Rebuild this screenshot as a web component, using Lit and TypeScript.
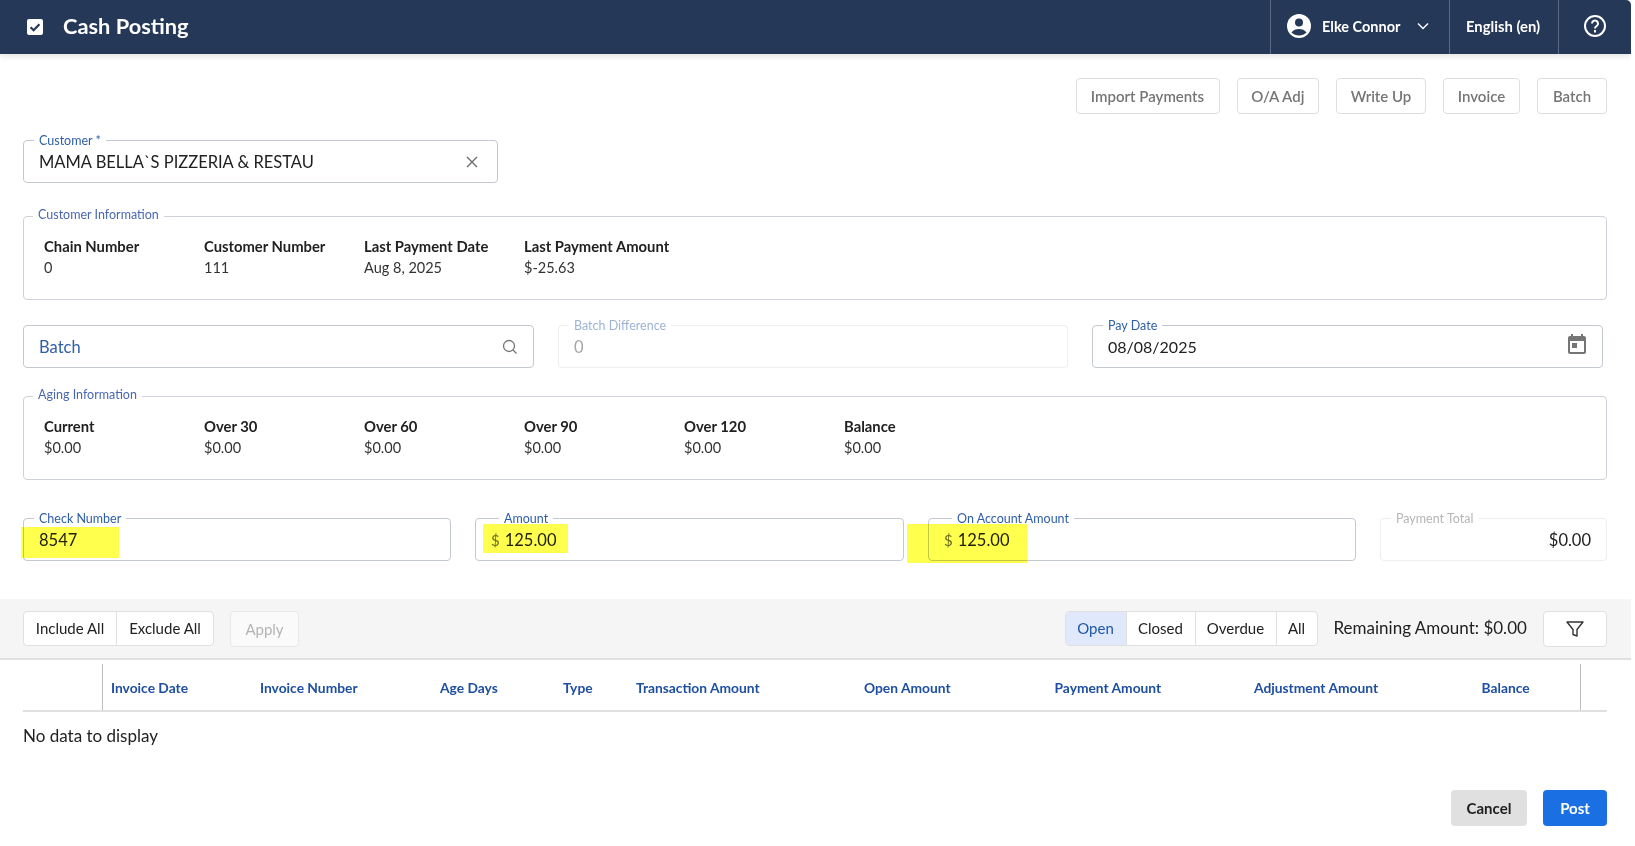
import { LitElement, html, css } from "lit";
import { customElement } from "lit/decorators.js";

@customElement("app-root")
export class AppRoot extends LitElement {
  static styles = css`
    :host { display: block; width: 1631px; height: 846px; position: relative; font-family: "Lato", "Noto Sans", sans-serif; color: #212121; background: #fff; overflow: hidden; }
    * { box-sizing: border-box; }
    .top { height: 54px; background: #263858; display: flex; align-items: stretch; color: #fff; box-shadow: 0 2px 6px rgba(0,0,0,.12); border-top-right-radius: 5px; }
    .brand { flex: 1; display: flex; align-items: center; padding: 0 0 3px 27px; gap: 20px; font-size: 21.8px; font-weight: 700; }
    .brand svg { width: 16px; height: 16px; margin-top: 3px; }
    .tcell { border-left: 1px solid #5a6a85; display: flex; align-items: center; padding-bottom: 2px; font-size: 14.5px; font-weight: 700; }
    .user { width: 179px; padding-left: 16px; gap: 11px; }
    .chev { margin-left: 6px; }
    .lang { width: 109px; padding-left: 16px; font-size: 14.8px; }
    .help { width: 73px; padding-left: 24px; }
    .actions { display: flex; justify-content: flex-end; gap: 17px; padding: 24px 24px 0 0; }
    .btn { height: 36px; white-space: nowrap; border: 1px solid #dedede; border-radius: 4px; background: #fff; color: #757575; font: 600 15px "Lato", sans-serif; display: flex; align-items: center; justify-content: center; }
    .w145 { width: 144px; } .w83 { width: 82.5px; } .w90 { width: 90px; } .w77 { width: 77px; } .w70 { width: 70px; }
    .main { padding: 0 24px 0 23px; }
    .field { position: relative; height: 43px; border: 1px solid #c4c8cf; border-radius: 4px; display: flex; align-items: center; padding: 0 15px; font-size: 16.5px; }
    .field label { position: absolute; left: 10px; top: -7px; padding: 0 5px; background: #fff; font-size: 12.5px; line-height: 14px; color: #2f5ea8; }
    .field .lab-in { left: 23px; }
    .grow { flex: 1; }
    .customer { width: 475px; margin-top: 26px; }
    .customer svg, .batch svg { width: 16px; height: 16px; }
    .x { margin-right: 2px; }
    .group { position: relative; border: 1px solid #cdd1d8; border-radius: 4px; height: 84px; padding: 20px 0 0 20px; display: grid; grid-template-columns: repeat(6, 160px); align-content: start; }
    .group > label { position: absolute; left: 9px; top: -9px; padding: 0 5px; background: #fff; font-size: 12.5px; line-height: 14px; color: #4a68b0; }
    .group b { display: block; font-weight: 700; font-size: 14.8px; line-height: 18px; color: #212121; }
    .group span { display: block; font-size: 14.5px; line-height: 18px; margin-top: 4px; color: #333; }
    .info { margin-top: 33px; }
    .row3 { display: grid; grid-template-columns: 511px 510px 511px; gap: 24px; margin-top: 25px; }
    .batch { color: #2f5ea8; }
    .dis { border-color: #eceef1; color: #a6a6a6; }
    .dis label { color: #9db3d6; }
    .date { font-size: 16px; }
    .cal { margin: -4px -2px 0 0; }
    .aging { margin-top: 28px; }
    .row4 { display: grid; grid-template-columns: 428px 429px 428px 227px; gap: 24px; margin-top: 38px; }
    .money { gap: 5px; padding-left: 15px; }
    .cur { color: #6b6b6b; font-size: 15px; }
    .tot { justify-content: flex-end; padding-right: 15px; color: #212121; }
    .tot label { color: #b5b5b5; }
    .toolbar { margin-top: 38px; height: 61px; background: #f5f5f5; border-bottom: 2px solid #e0e0e0; display: flex; padding: 12px 24px 0 23px; align-items: flex-start; }
    .seg { display: flex; height: 35px; border: 1px solid #e0e0e0; border-radius: 4px; background: #fff; overflow: hidden; }
    .seg div { display: flex; align-items: center; justify-content: center; padding-bottom: 2px; font-size: 15px; border-left: 1px solid #e0e0e0; color: #212121; }
    .seg div:first-child { border-left: 0; }
    .seg .on { background: #dfe9fb; color: #1f57a8; }
    .i1 { width: 92px; } .i2 { width: 97px; }
    .s1 { width: 60px; } .s2 { width: 69px; } .s3 { width: 81px; } .s4 { width: 41px; }
    .apply { width: 69px; height: 36px; margin-left: 16px; border: 1px solid #e8e8e8; border-radius: 4px; background: #fafafa; color: #b4b4b4; font-size: 15px; display: flex; align-items: center; justify-content: center; }
    .remain { width: 225.5px; padding-left: 16px; font-size: 17px; line-height: 33px; white-space: nowrap; }
    .filter { width: 64px; height: 36px; border: 1px solid #e0e0e0; border-radius: 4px; background: #fff; display: flex; align-items: center; justify-content: center; }
    .filter svg { width: 20px; height: 20px; }
    .thead { margin: 0 24px 0 23px; height: 52px; border-bottom: 2px solid #e0e0e0; display: grid; grid-template-columns: 80px 149px 180px 123px 73px 228px 190.5px 199.5px 227.6px 107px 26px; padding-top: 4px; }
    .thead div { display: flex; align-items: center; padding-left: 8px; font-size: 13.8px; font-weight: 700; color: #1f4fa0; white-space: nowrap; }
    .thead .sep { border-right: 1px solid #bdbdbd; }
    .nodata { margin: 14px 0 0 23px; font-size: 17px; line-height: 20px; }
    .foot { position: absolute; right: 24px; top: 790px; display: flex; gap: 16px; }
    .foot div { height: 36px; border-radius: 4px; display: flex; align-items: center; justify-content: center; font-size: 15px; font-weight: 700; }
    .cancel { width: 76px; background: #e0e0e0; color: #212121; }
    .post { width: 64px; background: #1a6fe3; color: #fff; }
    .hl { position: absolute; background: #ffff4d; mix-blend-mode: multiply; pointer-events: none; }
    .h1 { left: 21px; top: 527px; width: 98px; height: 31px; }
    .h2 { left: 483px; top: 524px; width: 85px; height: 29px; }
    .h3 { left: 907px; top: 524px; width: 120px; height: 39px; }
  `;

  render() {
    return html`
      <div class="top">
        <div class="brand">
          <svg viewBox="0 0 16 16"><rect width="16" height="16" rx="2" fill="#fff"/><path d="M3.6 8.2l3 3 5.8-6" fill="none" stroke="#263858" stroke-width="2.2"/></svg>
          Cash Posting
        </div>
        <div class="tcell user">
          <svg viewBox="0 0 24 24" width="24" height="24"><circle cx="12" cy="12" r="12" fill="#fff"/><circle cx="12" cy="8.500" r="4" fill="#263858"/><path d="M4.500 18.500c1.500-2.600 4.600-3.600 7.500-3.600s6 1 7.500 3.600c-2 2-4.600 3-7.500 3s-5.500-1-7.500-3z" fill="#263858"/></svg>
          <span>Elke Connor</span>
          <svg class="chev" viewBox="0 0 12 8" width="12" height="8"><path d="M1 1.500l5 5 5-5" fill="none" stroke="#fff" stroke-width="1.400"/></svg>
        </div>
        <div class="tcell lang">English (en)</div>
        <div class="tcell help">
          <svg viewBox="0 0 24 24" width="24" height="24" fill="none" stroke="#fff" stroke-width="2"><circle cx="12" cy="12" r="10"/><path d="M9 9.500a3 3 0 1 1 4.700 2.500c-1.100.7-1.700 1.300-1.700 2.500"/><path d="M12 16v2.500"/></svg>
        </div>
      </div>
      <div class="actions">
        <div class="btn w145">Import Payments</div>
        <div class="btn w83">O/A Adj</div>
        <div class="btn w90">Write Up</div>
        <div class="btn w77">Invoice</div>
        <div class="btn w70">Batch</div>
      </div>
      <div class="main">
        <div class="field customer">
          <label>Customer *</label>
          <span class="grow">MAMA BELLA\`S PIZZERIA & RESTAU</span>
          <svg class="x" viewBox="0 0 16 16"><path d="M3 3l10 10M13 3L3 13" stroke="#6b6b6b" stroke-width="1.400"/></svg>
        </div>
        <div class="group info">
          <label>Customer Information</label>
          <div><b>Chain Number</b><span>0</span></div>
          <div><b>Customer Number</b><span>111</span></div>
          <div><b>Last Payment Date</b><span>Aug 8, 2025</span></div>
          <div><b>Last Payment Amount</b><span>$-25.63</span></div>
        </div>
        <div class="row3">
          <div class="field batch">
            <span class="grow">Batch</span>
            <svg viewBox="0 0 16 16" fill="none" stroke="#757575" stroke-width="1.300"><circle cx="7" cy="7" r="5.500"/><path d="M11 11l3.500 3.500"/></svg>
          </div>
          <div class="field dis"><label>Batch Difference</label>0</div>
          <div class="field">
            <label>Pay Date</label>
            <span class="grow date">08/08/2025</span>
            <svg class="cal" viewBox="0 0 24 24" width="24" height="24"><path fill="#757575" d="M7 10h5v5H7zM19 19H5V8h14zM19 3h-1V1h-2v2H8V1H6v2H5a2 2 0 0 0-2 2v14a2 2 0 0 0 2 2h14a2 2 0 0 0 2-2V5a2 2 0 0 0-2-2z"/></svg>
          </div>
        </div>
        <div class="group aging">
          <label>Aging Information</label>
          <div><b>Current</b><span>$0.00</span></div>
          <div><b>Over 30</b><span>$0.00</span></div>
          <div><b>Over 60</b><span>$0.00</span></div>
          <div><b>Over 90</b><span>$0.00</span></div>
          <div><b>Over 120</b><span>$0.00</span></div>
          <div><b>Balance</b><span>$0.00</span></div>
        </div>
        <div class="row4">
          <div class="field"><label>Check Number</label>8547</div>
          <div class="field money"><label class="lab-in">Amount</label><span class="cur">$</span>125.00</div>
          <div class="field money"><label class="lab-in">On Account Amount</label><span class="cur">$</span>125.00</div>
          <div class="field dis tot"><label>Payment Total</label>$0.00</div>
        </div>
      </div>
      <div class="toolbar">
        <div class="seg">
          <div class="i1">Include All</div>
          <div class="i2">Exclude All</div>
        </div>
        <div class="apply">Apply</div>
        <div class="grow"></div>
        <div class="seg">
          <div class="on s1">Open</div>
          <div class="s2">Closed</div>
          <div class="s3">Overdue</div>
          <div class="s4">All</div>
        </div>
        <div class="remain">Remaining Amount: $0.00</div>
        <div class="filter">
          <svg viewBox="0 0 20 20" fill="none" stroke="#333" stroke-width="1.400" stroke-linejoin="round"><path d="M2 3h16l-6 7.500V17l-4-1.500v-5z"/></svg>
        </div>
      </div>
      <div class="thead">
        <div class="sep"></div>
        <div>Invoice Date</div>
        <div>Invoice Number</div>
        <div>Age Days</div>
        <div>Type</div>
        <div>Transaction Amount</div>
        <div>Open Amount</div>
        <div>Payment Amount</div>
        <div>Adjustment Amount</div>
        <div class="sep">Balance</div>
        <div></div>
      </div>
      <div class="nodata">No data to display</div>
      <div class="foot">
        <div class="cancel">Cancel</div>
        <div class="post">Post</div>
      </div>
      <div class="hl h1"></div>
      <div class="hl h2"></div>
      <div class="hl h3"></div>
    `;
  }
}
